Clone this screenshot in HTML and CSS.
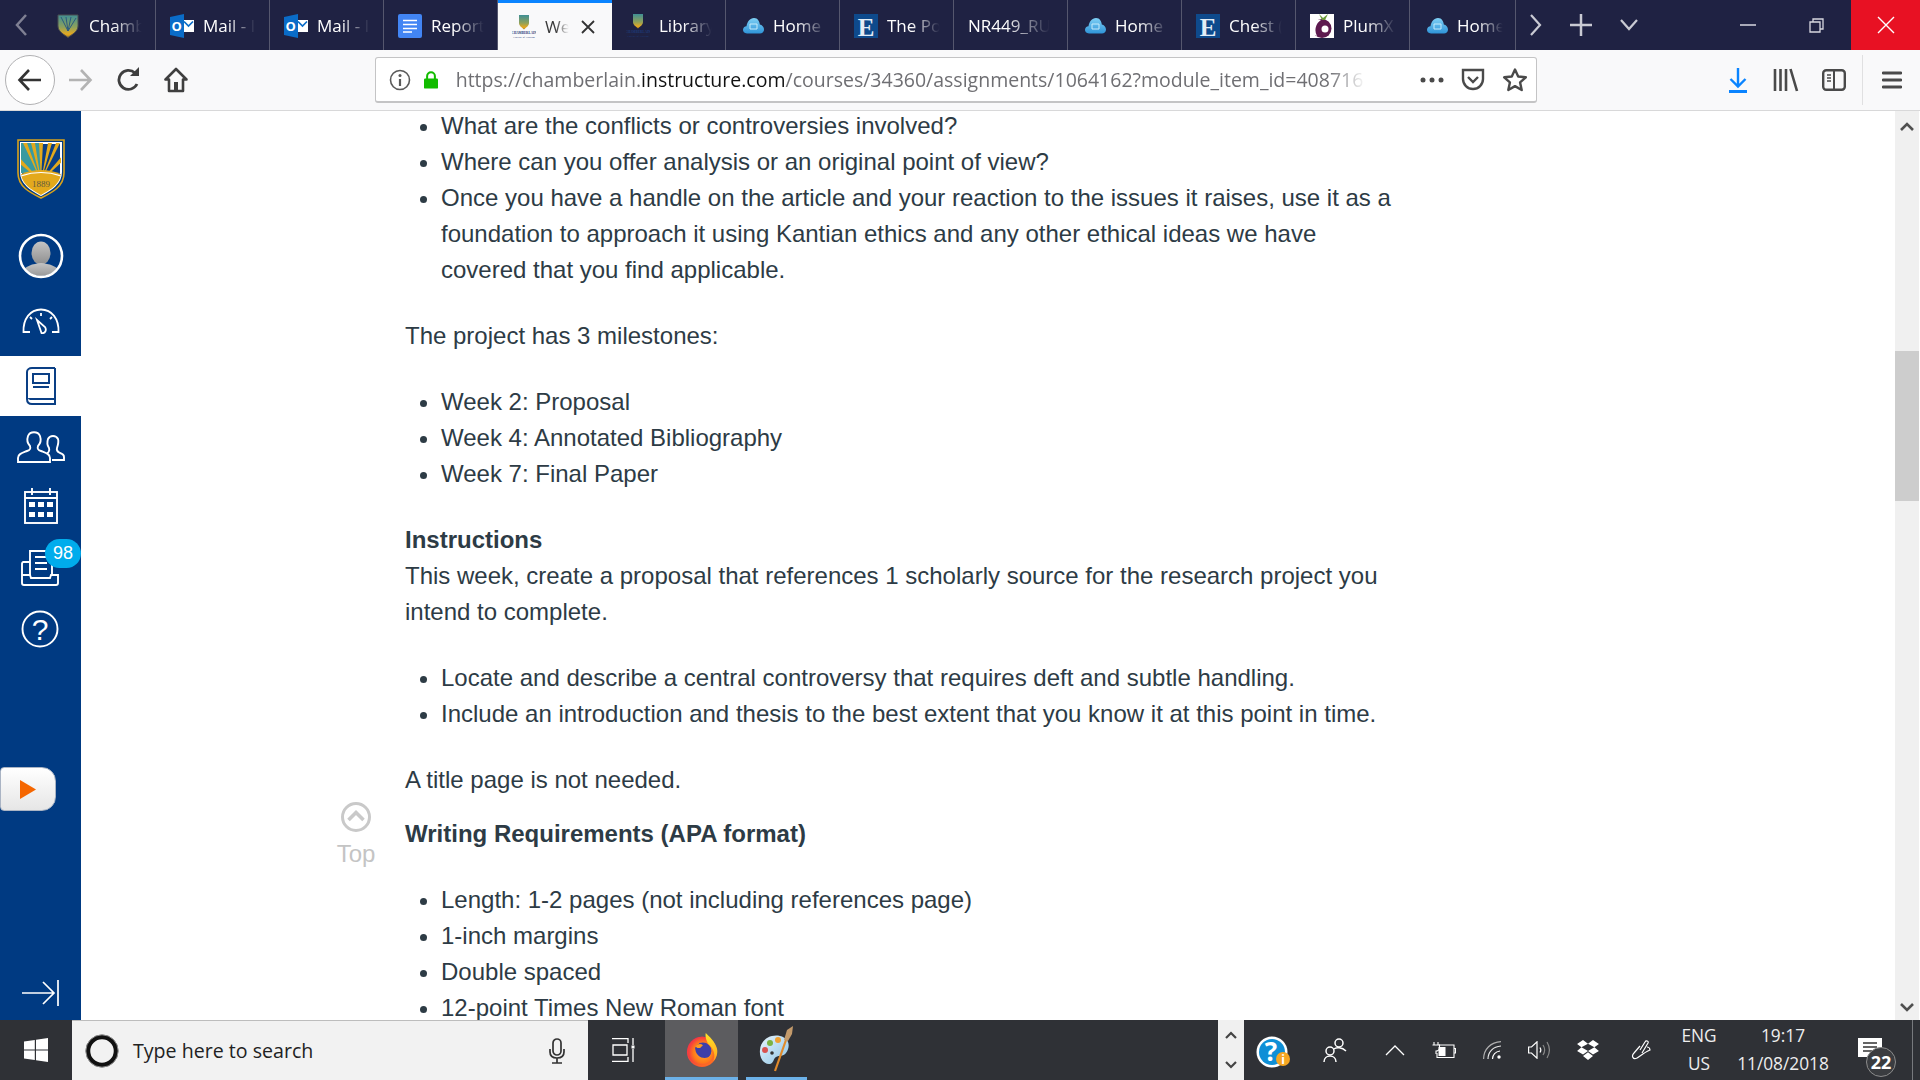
FILE: index.html
```html
<!DOCTYPE html>
<html lang="en">
<head>
<meta charset="utf-8">
<title>Week 2 Assignment</title>
<link rel="stylesheet" href="styles.css">
</head>
<body>
<svg class="defs" width="0" height="0" aria-hidden="true">
  <defs>
    <linearGradient id="shieldGold" x1="0" y1="0" x2="0" y2="1"><stop offset="0" stop-color="#3f8f95"/><stop offset="0.55" stop-color="#8fa15a"/><stop offset="0.85" stop-color="#e6a820"/><stop offset="1" stop-color="#a87f20"/></linearGradient>
    <linearGradient id="avatarGrad" x1="0" y1="0" x2="0" y2="1"><stop offset="0" stop-color="#c4c4c4"/><stop offset="1" stop-color="#8f8f8f"/></linearGradient>
    <radialGradient id="ffBody" cx="0.55" cy="0.55" r="0.6"><stop offset="0" stop-color="#ffb02e"/><stop offset="0.6" stop-color="#ff7a1a"/><stop offset="1" stop-color="#f0264f"/></radialGradient>
    <linearGradient id="ffTop" x1="0" y1="0" x2="0" y2="1"><stop offset="0" stop-color="#ffe226"/><stop offset="1" stop-color="#ffa51f"/></linearGradient>
    <linearGradient id="paintGrad" x1="0" y1="0" x2="1" y2="1"><stop offset="0" stop-color="#e8f4fb"/><stop offset="1" stop-color="#8cc4e6"/></linearGradient>
    <linearGradient id="cloudGrad" x1="0" y1="0" x2="0" y2="1"><stop offset="0" stop-color="#7fd0f5"/><stop offset="1" stop-color="#2f94d8"/></linearGradient>
    <symbol id="i-shield" viewBox="0 0 24 24">
      <path d="M2 1H22V12C22 18 15 21 12 23.500C9 21 2 18 2 12Z" fill="url(#shieldGold)" stroke="#4d4f50" stroke-width="1"/>
      <path d="M12 17L5 3M12 17L10 3M12 17L15 3M12 17L20 4" stroke="#2a5a80" stroke-width="1"/>
    </symbol>
    <symbol id="i-outlook" viewBox="0 0 24 24">
      <rect x="12" y="6" width="12" height="12" fill="#fff"/>
      <path d="M14 7.500L18.500 12L23 7.500" fill="none" stroke="#0a6cc8" stroke-width="1.700"/>
      <path d="M0 3L14 0V24L0 21Z" fill="#0a6cc8"/>
      <text x="6.800" y="16.500" class="svg-o">O</text>
    </symbol>
    <symbol id="i-docs" viewBox="0 0 24 24">
      <rect width="24" height="24" rx="2" fill="#4285f4"/>
      <path d="M5 6.500H19M5 10.500H19M5 14.500H19M5 18H14" stroke="#fff" stroke-width="1.600"/>
    </symbol>
    <symbol id="i-cloud" viewBox="0 0 24 24">
      <path d="M7 19.500C4 19.500 3 17.500 3 15.800C3 13.800 4.500 12.500 6.500 12.300C7 8 10 4 14 4C18 4 19.500 7.500 19.800 10.500C22 11 24 12.800 24 15.500C24 18 22 19.500 20 19.500Z" fill="url(#cloudGrad)"/>
      <path d="M10 15V10H17V15Z" fill="none" stroke="#c5ebfb" stroke-width="1"/>
    </symbol>
    <symbol id="i-e" viewBox="0 0 24 24">
      <rect width="24" height="24" fill="#0e4a8c"/>
      <text x="12" y="21.500" class="svg-e">E</text>
    </symbol>
    <symbol id="i-plum" viewBox="0 0 24 24">
      <rect width="24" height="24" fill="#fff"/>
      <circle cx="12" cy="14.500" r="9.500" fill="#5d1a4f"/>
      <path d="M11 6a8 8 0 0 0-4 16a12 12 0 0 1 4-16Z" fill="#fff"/>
      <circle cx="15" cy="15" r="3.500" fill="#fff"/>
      <path d="M12 6L9 0L13 4L18 0L15 6Z" fill="#6a9a3a"/>
    </symbol>
    <symbol id="i-cham" viewBox="0 0 24 24">
      <path d="M7 0H17V8C17 11 14 12.500 12 14.500C10 12.500 7 11 7 8Z" fill="url(#shieldGold)"/>
      <text x="12" y="19" class="svg-cham">CHAMBERLAIN</text>
      <text x="12" y="23" class="svg-cham2">College of Nursing</text>
    </symbol>
  </defs>
</svg>

<header class="tabbar">
  <div class="tab-scroll-left"><svg width="14" height="26" viewBox="0 0 14 26"><path d="M12 3L3 13L12 23" fill="none" stroke="#7f8093" stroke-width="2.500"/></svg></div>
  <div class="tab"><svg class="fav"><use href="#i-shield"/></svg><span class="tab-label">Chamb</span></div>
  <div class="tab"><svg class="fav"><use href="#i-outlook"/></svg><span class="tab-label">Mail - I</span></div>
  <div class="tab"><svg class="fav"><use href="#i-outlook"/></svg><span class="tab-label">Mail - I</span></div>
  <div class="tab"><svg class="fav"><use href="#i-docs"/></svg><span class="tab-label">Report</span></div>
  <div class="tab tab-active"><svg class="fav"><use href="#i-cham"/></svg><span class="tab-label">We</span><svg class="tab-close" width="16" height="16" viewBox="0 0 16 16"><path d="M2 2L14 14M14 2L2 14" stroke="#333" stroke-width="1.800"/></svg></div>
  <div class="tab"><svg class="fav"><use href="#i-cham"/></svg><span class="tab-label">Library</span></div>
  <div class="tab"><svg class="fav"><use href="#i-cloud"/></svg><span class="tab-label">Home</span></div>
  <div class="tab"><svg class="fav"><use href="#i-e"/></svg><span class="tab-label">The Po</span></div>
  <div class="tab"><span class="tab-label">NR449_RU</span></div>
  <div class="tab"><svg class="fav"><use href="#i-cloud"/></svg><span class="tab-label">Home</span></div>
  <div class="tab"><svg class="fav"><use href="#i-e"/></svg><span class="tab-label">Chest (</span></div>
  <div class="tab"><svg class="fav"><use href="#i-plum"/></svg><span class="tab-label">PlumX</span></div>
  <div class="tab tab-last"><svg class="fav"><use href="#i-cloud"/></svg><span class="tab-label">Home</span></div>
  <div class="tabbar-btn tabbar-next"><svg width="14" height="26" viewBox="0 0 14 26"><path d="M2 3L11 13L2 23" fill="none" stroke="#c9cad3" stroke-width="2.200"/></svg></div>
  <div class="tabbar-btn tabbar-plus"><svg width="22" height="22" viewBox="0 0 22 22"><path d="M11 0V22M0 11H22" stroke="#c9cad3" stroke-width="2.500"/></svg></div>
  <div class="tabbar-btn tabbar-more"><svg width="18" height="12" viewBox="0 0 18 12"><path d="M1 1L9 10L17 1" fill="none" stroke="#c9cad3" stroke-width="2.200"/></svg></div>
  <div class="win-spacer"></div>
  <div class="win-btn win-min"><svg width="16" height="2" viewBox="0 0 16 2"><path d="M0 1H16" stroke="#d8d8e0" stroke-width="1.500"/></svg></div>
  <div class="win-btn"><svg width="15" height="15" viewBox="0 0 15 15"><path d="M1 4H11V14H1ZM4 4V1H14V11H11" fill="none" stroke="#d8d8e0" stroke-width="1.300"/></svg></div>
  <div class="win-btn win-close"><svg width="18" height="18" viewBox="0 0 18 18"><path d="M1 1L17 17M17 1L1 17" stroke="#fff" stroke-width="1.400"/></svg></div>
</header>

<nav class="toolbar">
  <div class="nav-btn nav-back"><svg width="26" height="26" viewBox="0 0 26 26"><path d="M24 13H3M12 3L2.500 13L12 23" fill="none" stroke="#333" stroke-width="2.600"/></svg></div>
  <div class="nav-btn nav-fwd"><svg width="26" height="26" viewBox="0 0 26 26"><path d="M2 13H23M14 3L23.500 13L14 23" fill="none" stroke="#b3b3b3" stroke-width="2.600"/></svg></div>
  <div class="nav-btn nav-reload"><svg width="24" height="26" viewBox="0 0 24 26"><path d="M20 17A9.500 9.500 0 1 1 18 6" fill="none" stroke="#3f3f3f" stroke-width="2.800"/><path d="M13 9H22V0Z" fill="#3f3f3f"/></svg></div>
  <div class="nav-btn nav-home"><svg width="24" height="26" viewBox="0 0 24 26"><path d="M12 2L1.500 12.500H5V24H19V12.500H22.500Z" fill="none" stroke="#3f3f3f" stroke-width="2.600" stroke-linejoin="round"/><rect x="10" y="15" width="4" height="9" fill="#3f3f3f"/></svg></div>
  <div class="urlbar">
    <div class="url-info"><svg width="22" height="22" viewBox="0 0 22 22"><circle cx="11" cy="11" r="9.500" fill="none" stroke="#5a5a5a" stroke-width="1.600"/><path d="M11 10V17" stroke="#5a5a5a" stroke-width="2.200"/><circle cx="11" cy="6.500" r="1.500" fill="#5a5a5a"/></svg></div>
    <div class="url-lock"><svg width="18" height="22" viewBox="0 0 18 22"><path d="M4 10V6a5 5 0 0 1 10 0V10" fill="none" stroke="#12bc00" stroke-width="2.600"/><rect x="0" y="9" width="18" height="13" rx="1.500" fill="#12bc00"/></svg></div>
    <div class="url-text"><span class="url-dim">https://chamberlain.</span><span class="url-host">instructure.com</span><span class="url-dim">/courses/34360/assignments/1064162?module_item_id=408716</span></div>
    <div class="url-more"><svg width="24" height="6" viewBox="0 0 24 6"><circle cx="3" cy="3" r="2.500" fill="#4a4a4a"/><circle cx="12" cy="3" r="2.500" fill="#4a4a4a"/><circle cx="21" cy="3" r="2.500" fill="#4a4a4a"/></svg></div>
    <div class="url-pocket"><svg width="24" height="24" viewBox="0 0 24 24"><path d="M2 2H22V11A10 10 0 0 1 2 11Z" fill="none" stroke="#4a4a4a" stroke-width="2.400"/><path d="M7 9L12 14L17 9" fill="none" stroke="#4a4a4a" stroke-width="2.400"/></svg></div>
    <div class="url-star"><svg width="26" height="26" viewBox="0 0 26 26"><path d="M13 2.500L16.200 9.500L23.800 10.300L18.100 15.400L19.700 23L13 19.100L6.300 23L7.900 15.400L2.200 10.300L9.800 9.500Z" fill="none" stroke="#4a4a4a" stroke-width="2.400" stroke-linejoin="round"/></svg></div>
  </div>
  <div class="tool-space"></div>
  <div class="tool-btn"><svg width="20" height="26" viewBox="0 0 20 26"><path d="M10 1V19M2.500 12L10 19.500L17.500 12" fill="none" stroke="#0a84ff" stroke-width="2.400"/><rect x="1" y="23" width="18" height="3" fill="#0a84ff"/></svg></div>
  <div class="tool-btn"><svg width="26" height="24" viewBox="0 0 26 24"><path d="M2 1V23M7.500 1V23M13 1V23M17.500 1L24 23" fill="none" stroke="#4a4a4a" stroke-width="2.600"/></svg></div>
  <div class="tool-btn"><svg width="24" height="22" viewBox="0 0 24 22"><rect x="1.200" y="1.200" width="21.600" height="19.600" rx="3" fill="none" stroke="#4a4a4a" stroke-width="2.400"/><path d="M12 1V21" stroke="#4a4a4a" stroke-width="2"/><path d="M5 6H9M5 9H9M5 12H9" stroke="#4a4a4a" stroke-width="1.400"/></svg></div>
  <div class="tool-sep"></div>
  <div class="tool-btn tool-menu"><svg width="20" height="20" viewBox="0 0 20 20"><path d="M1 3H19M1 10H19M1 17H19" stroke="#4a4a4a" stroke-width="2.800" stroke-linecap="round"/></svg></div>
</nav>

<main class="app">
  <aside class="sidebar">
    <div class="side-logo">
      <svg width="48" height="60" viewBox="0 0 48 60">
        <defs><clipPath id="shieldClip"><path d="M4 4H44V33C44 45 33 51 24 56C15 51 4 45 4 33Z"/></clipPath></defs>
        <path d="M1 1H47V34C47 48 34 54 24 59C14 54 1 48 1 34Z" fill="#003a82" stroke="#d9a21b" stroke-width="1.600"/>
        <path d="M4 4H44V33C44 45 33 51 24 56C15 51 4 45 4 33Z" fill="#0a3f85" stroke="#fff" stroke-width="2"/>
        <g clip-path="url(#shieldClip)">
          <rect x="4" y="4" width="20" height="30" fill="#3a9aa0"/>
          <path d="M24 42L2 18L2 24ZM24 42L6 4L10 4ZM24 42L14 4L18 4ZM24 42L22 4L26 4ZM24 42L31 4L35 4ZM24 42L39 4L43 4ZM24 42L46 16L46 22Z" fill="#e3a91c"/>
          <path d="M2 36Q24 26 46 36V60H2Z" fill="#e3a91c"/>
          <path d="M4 37Q24 30 44 37" stroke="#fff" stroke-width="1.200" fill="none"/>
          <text x="24" y="48" class="svg-year">1889</text>
        </g>
      </svg>
    </div>
    <div class="side-item side-avatar">
      <svg width="46" height="46" viewBox="0 0 46 46">
        <defs><clipPath id="avClip"><circle cx="23" cy="23" r="20"/></clipPath></defs>
        <g clip-path="url(#avClip)"><ellipse cx="23" cy="20" rx="9.500" ry="11.500" fill="url(#avatarGrad)"/><path d="M2 46C3 33 14 31 23 30C32 31 43 33 44 46Z" fill="url(#avatarGrad)"/></g>
        <circle cx="23" cy="23" r="21" fill="none" stroke="#fff" stroke-width="2.600"/>
      </svg>
    </div>
    <div class="side-item side-dash">
      <svg width="38" height="26" viewBox="0 0 38 26" fill="none" stroke="#fff" stroke-width="1.800"><path d="M8 24H1.500C1 11 8 1.500 19 1.500C30 1.500 37 11 36.500 24H30"/><path d="M19 5V8M8 9L10 11M30 9L28 11"/><path d="M15 12L19.500 25C24 26 24.500 21 23 19Z"/></svg>
    </div>
    <div class="side-item side-active">
      <svg width="30" height="38" viewBox="0 0 30 38" fill="none" stroke="#0a3f85" stroke-width="2"><path d="M29 1H6C3 1 1 3 1 5V32C1 35 3 37 6 37H29V32H6C4 32 3 32 3 31"/><path d="M29 1V32"/><rect x="7" y="7" width="16" height="9"/><path d="M7 20H23"/></svg>
    </div>
    <div class="side-item side-people">
      <svg width="48" height="32" viewBox="0 0 48 32" fill="none" stroke="#fff" stroke-width="1.900"><path d="M1 31V27C1 23 5 22 10 20C13 19 14 18 13 15C10 12 10 8 11 5C13 0 21 0 23 5C24 8 24 12 21 15C20 18 21 19 24 20C29 22 33 23 33 27V31Z"/><path d="M30 22C31 22 33 20 32 17C30 14 30 11 31 8C33 4 39 4 41 8C42 11 41 14 40 17C39 20 41 21 43 22C46 23 47 24 47 26V29H35"/></svg>
    </div>
    <div class="side-item side-cal">
      <svg width="34" height="36" viewBox="0 0 34 36" fill="none" stroke="#fff" stroke-width="1.900"><rect x="1" y="4" width="32" height="31" /><path d="M1 10H33M8 0V7M26 0V7"/><g fill="#fff" stroke="none"><rect x="5" y="14" width="6" height="5"/><rect x="14" y="14" width="6" height="5"/><rect x="23" y="14" width="6" height="5"/><rect x="5" y="24" width="6" height="5"/><rect x="14" y="24" width="6" height="5"/><rect x="23" y="24" width="6" height="5"/></g></svg>
    </div>
    <div class="side-item side-inbox">
      <svg width="38" height="36" viewBox="0 0 38 36" fill="none" stroke="#fff" stroke-width="1.900"><path d="M9 25V1H31V25"/><path d="M9 12H2.500C1.500 12 1 13 1 14V33C1 34 2 35 3 35H35C36 35 37 34 37 33V24"/><path d="M1 25H9L10 28H29L30 25H37"/><path d="M14 7H26M14 13H26M14 19H26"/></svg>
      <span class="side-badge">98</span>
    </div>
    <div class="side-item side-help">
      <svg width="38" height="38" viewBox="0 0 38 38"><circle cx="19" cy="19" r="17.500" fill="none" stroke="#fff" stroke-width="1.900"/><text x="19" y="29.500" class="svg-help">?</text></svg>
    </div>
    <div class="side-spacer"></div>
    <div class="side-play"><svg width="16" height="19" viewBox="0 0 16 19"><path d="M0 0L16 9.500L0 19Z" fill="#f56600"/></svg></div>
    <div class="side-collapse"><svg width="37" height="26" viewBox="0 0 37 26" fill="none" stroke="#fff" stroke-width="1.700"><path d="M0 13H32M21 2L32 13L21 24M36 0V26"/></svg></div>
  </aside>

  <section class="content">
    <div class="top-link">
      <svg width="32" height="30" viewBox="0 0 32 30" fill="none" stroke="#c9c9c9"><circle cx="16" cy="15" r="13.500" stroke-width="3"/><path d="M8.500 18L16 10.500L23.500 18" stroke-width="3.600"/></svg>
      <span>Top</span>
    </div>
    <article class="article">
      <ul>
        <li>What are the conflicts or controversies involved?</li>
        <li>Where can you offer analysis or an original point of view?</li>
        <li>Once you have a handle on the article and your reaction to the issues it raises, use it as a foundation to approach it using Kantian ethics and any other ethical ideas we have covered that you find applicable.</li>
      </ul>
      <p>The project has 3 milestones:</p>
      <ul>
        <li>Week 2: Proposal</li>
        <li>Week 4: Annotated Bibliography</li>
        <li>Week 7: Final Paper</li>
      </ul>
      <p><strong>Instructions</strong><br>This week, create a proposal that references 1 scholarly source for the research project you intend to complete.</p>
      <ul>
        <li>Locate and describe a central controversy that requires deft and subtle handling.</li>
        <li>Include an introduction and thesis to the best extent that you know it at this point in time.</li>
      </ul>
      <p>A title page is not needed.</p>
      <p><strong>Writing Requirements (APA format)</strong></p>
      <ul>
        <li>Length: 1-2 pages (not including references page)</li>
        <li>1-inch margins</li>
        <li>Double spaced</li>
        <li>12-point Times New Roman font</li>
      </ul>
    </article>
  </section>

  <div class="scrollbar">
    <div class="scroll-arrow scroll-arrow-top"><svg width="14" height="9" viewBox="0 0 14 9"><path d="M1 8L7 2L13 8" fill="none" stroke="#505050" stroke-width="2.600"/></svg></div>
    <div class="scroll-thumb"></div>
    <div class="scroll-track"></div>
    <div class="scroll-arrow"><svg width="14" height="9" viewBox="0 0 14 9"><path d="M1 1L7 7L13 1" fill="none" stroke="#505050" stroke-width="2.600"/></svg></div>
  </div>
</main>

<footer class="taskbar">
  <div class="start"><svg width="24" height="24" viewBox="0 0 24 24" fill="#fff"><path d="M0 3.400L10.800 2V11.400H0ZM12 1.800L24 0V11.400H12ZM0 12.600H10.800V22L0 20.600ZM12 12.600H24V24L12 22.200Z"/></svg></div>
  <div class="search">
    <svg class="cortana" width="34" height="34" viewBox="0 0 34 34"><circle cx="17" cy="17" r="14" fill="none" stroke="#111" stroke-width="4.500"/><circle cx="17" cy="17" r="16.200" fill="none" stroke="#8a8a8a" stroke-width="1"/></svg>
    <span class="search-text">Type here to search</span>
    <svg class="mic" width="18" height="26" viewBox="0 0 18 26" fill="none" stroke="#333" stroke-width="1.700"><rect x="5" y="1" width="8" height="16" rx="4"/><path d="M2 11V14C2 18 5 20 9 20C13 20 16 18 16 14V11M9 20V25M4 25H14"/></svg>
  </div>
  <div class="task-view"><svg width="24" height="24" viewBox="0 0 24 24" fill="none" stroke="#fff" stroke-width="1.300"><path d="M0 0.700H16V5M0 23.300H16V19M1 7H15V17H1ZM21 0V7M21 11V24"/><rect x="19.500" y="7.500" width="3" height="3" fill="#fff" stroke="none"/></svg></div>
  <div class="task-app task-app-active">
    <svg width="32" height="34" viewBox="0 0 34 36">
      <circle cx="17" cy="20" r="16" fill="url(#ffBody)"/>
      <circle cx="18" cy="19" r="9" fill="#3d3fa8"/>
      <path d="M3 17C6 7 13 3 19 4C14 7 13 10 14 12C11 12 9 14 10 18C11 24 17 28 23 26C28 24 30 18 27 13C33 17 32 26 26 31C20 36 10 35 5 29C2 25 2 21 3 17Z" fill="url(#ffBody)"/>
      <path d="M21 0C24 3 31 9 33 17C34 22 32 27 29 30C32 24 29 16 24 12C22 9 20 4 21 0Z" fill="url(#ffTop)"/>
      <path d="M10 14C13 11 16 11 18 13L15 16L12 16Z" fill="#ff9a1f"/>
    </svg>
  </div>
  <div class="task-app">
    <svg class="paint-icon" width="36" height="46" viewBox="0 0 36 46">
      <path d="M2 24C3 13 13 8 22 10C31 12 33 20 28 27C25 31 21 29 18 31C15 33 16 37 12 38C6 39 1 32 2 24Z" fill="url(#paintGrad)"/>
      <circle cx="7" cy="24" r="3" fill="#d9534f"/><circle cx="12" cy="17" r="3" fill="#7cb342"/><circle cx="20" cy="14" r="3" fill="#f0a030"/><circle cx="14" cy="27" r="1.800" fill="#333"/>
      <path d="M17 45L28 14" stroke="#e08a2a" stroke-width="2.200"/><path d="M26 14L29 4L35 0L34 8L30 15Z" fill="#c39a6b"/>
    </svg>
  </div>
  <div class="task-space"></div>
  <div class="task-scroll">
    <svg width="12" height="8" viewBox="0 0 12 8"><path d="M1 7L6 2L11 7" fill="none" stroke="#444" stroke-width="2.200"/></svg>
    <svg width="12" height="8" viewBox="0 0 12 8"><path d="M1 1L6 6L11 1" fill="none" stroke="#444" stroke-width="2.200"/></svg>
  </div>
  <div class="tray tray-help">
    <svg width="36" height="36" viewBox="0 0 36 36"><circle cx="16" cy="20" r="15.500" fill="#fff"/><circle cx="16" cy="20" r="13" fill="#0f8fd6"/><text x="15" y="29" class="svg-q">?</text><circle cx="27" cy="27" r="7" fill="#f5a623"/><text x="27" y="32" class="svg-i">i</text></svg>
  </div>
  <div class="tray tray-people"><svg width="24" height="26" viewBox="0 0 24 26" fill="none" stroke="#fff" stroke-width="1.500"><circle cx="16" cy="6" r="4"/><path d="M11 12C13 10 19 10 23 14"/><circle cx="7" cy="14" r="4"/><path d="M1 25C1 21 4 19 7 19C10 19 13 21 13 25"/></svg></div>
  <div class="tray tray-chev"><svg width="20" height="12" viewBox="0 0 20 12"><path d="M1 11L10 2L19 11" fill="none" stroke="#fff" stroke-width="1.300"/></svg></div>
  <div class="tray tray-batt"><svg width="24" height="16" viewBox="0 0 24 16" fill="none" stroke="#fff" stroke-width="1.100"><path d="M7 3H22V15.500H5V11"/><path d="M22 6.500H23.500V11H22" /><rect x="6.500" y="5" width="7" height="9" fill="#fff" stroke="none"/><path d="M2 0V3M6 0V3M0.500 3H7.500V6C7.500 8 5.500 9 4 9V12" /></svg></div>
  <div class="tray tray-wifi"><svg width="18" height="18" viewBox="0 0 18 18" fill="none" stroke-width="1.200"><path d="M0.600 18C0.600 8 8 1 18 0.600" stroke="#b0b0b0"/><path d="M5 18C5 11 10 5.500 18 5" stroke="#e8e8e8"/><path d="M9.500 18C9.500 14 12.500 10.500 17 10" stroke="#fff"/><circle cx="16" cy="16" r="1.700" fill="#fff"/></svg></div>
  <div class="tray tray-vol"><svg width="22" height="18" viewBox="0 0 22 18" fill="none" stroke="#fff" stroke-width="1.200"><path d="M0.600 6H3.500L9 0.800V17.200L3.500 12H0.600Z"/><path d="M12 6.500C13 8 13 10 12 11.500"/><path d="M15 4C17 7 17 11 15 14M19 1C22 6 22 12 19 17" stroke="#888"/></svg></div>
  <div class="tray tray-drop"><svg width="22" height="20" viewBox="0 0 24 22" fill="#fff"><path d="M6.500 0L0 4.300L4.800 8L12 4ZM17.500 0L12 4L19 8L24 4.300ZM4.800 8L0 12L6.500 16L12 12ZM19 8L12 12L17.500 16L24 12ZM12 13.500L6.500 17.500L12 22L17.500 17.500Z"/></svg></div>
  <div class="tray tray-pen"><svg width="20" height="20" viewBox="0 0 20 20" fill="none" stroke="#fff" stroke-width="1.200"><path d="M9 10L14 2C15 0 18 1 17 3L11 13"/><path d="M9 6L3 13C0 16 2 20 6 18C9 16 14 12 19 10C19 8 17 7 16 7"/></svg></div>
  <div class="tray tray-lang"><span>ENG</span><span>US</span></div>
  <div class="tray tray-clock"><span>19:17</span><span>11/08/2018</span></div>
  <div class="tray tray-notif">
    <svg width="24" height="19" viewBox="0 0 24 19"><path d="M0 0H24V19H0Z" fill="#fff"/><path d="M5 5H19M5 9H19M5 13H19" stroke="#333" stroke-width="1.300"/></svg>
    <span class="notif-count">22</span>
  </div>
</footer>
</body>
</html>
```

FILE: styles.css
```css
* { box-sizing: border-box; }
html, body { margin: 0; padding: 0; }
body {
  width: 1920px;
  height: 1080px;
  overflow: hidden;
  display: flex;
  flex-direction: column;
  font-family: "Liberation Sans", Arial, sans-serif;
  background: #fff;
}
.defs { position: absolute; }

.svg-o { font: 700 13px "Open Sans", sans-serif; fill: #fff; text-anchor: middle; }
.svg-e { font: 700 25px "Liberation Serif", serif; fill: #e4edf6; text-anchor: middle; }
.svg-cham { font: 700 3.300px "Liberation Serif", serif; fill: #1e3a78; text-anchor: middle; }
.svg-cham2 { font: 400 2.800px "Liberation Serif", serif; fill: #1e3a78; text-anchor: middle; }
.svg-year { font: 400 9px "Liberation Serif", serif; fill: #5f5a40; text-anchor: middle; }
.svg-help { font: 400 30px "Liberation Sans", sans-serif; fill: #fff; text-anchor: middle; }
.svg-q { font: 700 26px "Open Sans", sans-serif; fill: #fff; text-anchor: middle; }
.svg-i { font: 700 12px "Open Sans", sans-serif; fill: #fff; text-anchor: middle; }

/* tab strip */
.tabbar {
  height: 50px;
  flex: none;
  display: flex;
  background: #1f2243;
  color: #fff;
  font-family: "Open Sans", sans-serif;
  font-size: 17px;
}
.tab-scroll-left { width: 42px; display: flex; align-items: center; justify-content: center; }
.tab {
  width: 114px;
  flex: none;
  display: flex;
  align-items: center;
  padding: 0 6px 0 14px;
  border-right: 1px solid #55576e;
}
.tab-last { width: 106px; }
.tab-active {
  background: #f9f9fa;
  border-top: 3px solid #0a84ff;
  border-right: 0;
  color: #3a3a3a;
  padding-right: 16px;
}
.fav { width: 24px; height: 24px; flex: none; margin: 2px 9px 0 0; }
.tab-active .fav { margin-top: 0; }
.tab-label {
  flex: 1;
  min-width: 0;
  white-space: nowrap;
  -webkit-mask-image: linear-gradient(to right, #000 40%, transparent 88%);
  mask-image: linear-gradient(to right, #000 40%, transparent 88%);
}
.tab-close { flex: none; margin-left: 8px; }
.tabbar-btn { display: flex; align-items: center; justify-content: center; height: 50px; flex: none; }
.tabbar-next { width: 40px; }
.tabbar-plus { width: 50px; }
.tabbar-more { width: 46px; }
.win-spacer { flex: 1; }
.win-btn { width: 70px; height: 50px; flex: none; display: flex; align-items: center; justify-content: center; }
.win-min svg { margin-left: 4px; }
.win-close { width: 69px; background: #e81123; }

/* nav bar */
.toolbar {
  height: 61px;
  flex: none;
  display: flex;
  align-items: center;
  background: #f9f9fa;
  border-bottom: 1px solid #d8d8d9;
}
.nav-btn { height: 50px; display: flex; align-items: center; justify-content: center; flex: none; }
.nav-back {
  width: 50px;
  margin-left: 5px;
  border-radius: 50%;
  border: 1px solid #b1b1b3;
  background: #fff;
}
.nav-fwd { width: 50px; }
.nav-reload { width: 47px; }
.nav-home { width: 47px; margin-right: 176px; }
.urlbar {
  width: 1162px;
  height: 46px;
  flex: none;
  display: flex;
  align-items: center;
  background: #fff;
  border: 1px solid #c4c4c5;
  border-bottom-width: 2px;
  border-radius: 3px;
  font-family: "Open Sans", sans-serif;
}
.url-info { width: 47px; margin-left: 1px; display: flex; justify-content: center; }
.url-lock { width: 14px; display: flex; justify-content: center; }
.url-text {
  width: 910px;
  flex: none;
  margin-left: 18px;
  font-size: 19.500px;
  white-space: nowrap;
  overflow: hidden;
  -webkit-mask-image: linear-gradient(to right, #000 96%, transparent 100%);
  mask-image: linear-gradient(to right, #000 96%, transparent 100%);
}
.url-dim { color: #6f6f73; }
.url-host { color: #111; }
.url-more { width: 30px; margin-left: 51px; display: flex; justify-content: center; }
.url-pocket { width: 42px; margin-left: 6px; display: flex; justify-content: center; }
.url-star { width: 42px; display: flex; justify-content: center; }
.tool-space { flex: 1; }
.tool-btn { width: 48px; height: 50px; display: flex; align-items: center; justify-content: center; flex: none; }
.tool-sep { width: 1px; height: 50px; background: #e0e0e1; flex: none; margin-left: 4px; }
.tool-menu { width: 57px; }

/* app region */
.app { flex: 1; min-height: 0; display: flex; }
.sidebar {
  width: 81px;
  flex: none;
  background: #003a82;
  display: flex;
  flex-direction: column;
}
.side-logo { height: 113px; flex: none; display: flex; justify-content: center; padding-top: 28px; }
.side-item {
  flex: none;
  display: flex;
  align-items: center;
  justify-content: center;
  position: relative;
}
.side-avatar { height: 64px; }
.side-dash { height: 68px; padding-bottom: 2px; }
.side-active { background: #fff; height: 60px; }
.side-people { height: 62px; }
.side-cal { height: 56px; }
.side-inbox { height: 68px; }
.side-inbox svg { margin-left: -1px; }
.side-help { height: 54px; padding-right: 2px; }
.side-badge {
  position: absolute;
  left: 45px;
  top: 5px;
  width: 36px;
  height: 29px;
  border-radius: 15px;
  background: #00acec;
  color: #fff;
  font-size: 18px;
  line-height: 29px;
  text-align: center;
}
.side-spacer { flex: 1; }
.side-play {
  width: 56px;
  height: 44px;
  flex: none;
  background: linear-gradient(#fff, #e6e6e6);
  border-radius: 4px 14px 14px 4px;
  border: 1px solid #aab4c4;
  display: flex;
  align-items: center;
  justify-content: center;
  margin-bottom: 169px;
}
.side-collapse { height: 26px; flex: none; padding-left: 22px; margin-bottom: 14px; }

.content { flex: 1; min-width: 0; position: relative; overflow: hidden; padding-left: 324px; }
.article {
  width: 1000px;
  margin-top: -33px;
  color: #2d3b45;
  font-size: 24px;
  line-height: 36px;
}
.article p { margin: 18px 0; }
.article ul { margin: 30px 0; padding-left: 36px; }
.top-link {
  position: absolute;
  left: 250px;
  top: 691px;
  width: 50px;
  display: flex;
  flex-direction: column;
  align-items: center;
  gap: 4px;
  color: #c4c4c4;
  font-size: 24px;
  line-height: 36px;
}

.scrollbar {
  width: 24px;
  flex: none;
  margin-right: 1px;
  background: #f0f0f0;
  display: flex;
  flex-direction: column;
}
.scroll-arrow { height: 25px; flex: none; display: flex; align-items: center; justify-content: center; }
.scroll-arrow-top { height: 30px; }
.scroll-thumb { height: 150px; flex: none; margin-top: 210px; background: #cdcdcd; }
.scroll-track { flex: 1; }

/* taskbar */
.taskbar {
  height: 60px;
  flex: none;
  display: flex;
  align-items: stretch;
  background: #2f3136;
  color: #fff;
  font-family: "Open Sans", sans-serif;
}
.start { width: 72px; display: flex; align-items: center; justify-content: center; flex: none; }
.search {
  width: 516px;
  flex: none;
  background: #f2f2f2;
  border-top: 1px solid #bdbdbd;
  display: flex;
  align-items: center;
  color: #222;
  font-size: 19.600px;
}
.cortana { margin-left: 13px; }
.search-text { margin-left: 14px; flex: 1; }
.mic { margin-right: 22px; }
.task-view { width: 77px; flex: none; display: flex; align-items: center; justify-content: center; padding-right: 5px; }
.task-app {
  width: 61px;
  flex: none;
  display: flex;
  align-items: center;
  justify-content: center;
  border-bottom: 3px solid #6cb1e8;
  margin-left: 8px;
}
.task-app-active { width: 73px; margin-left: 0; background: #5c5c5f; padding-top: 3px; }
.paint-icon { margin-right: 2px; }
.task-space { flex: 1; }
.task-scroll {
  width: 26px;
  flex: none;
  background: #f0f0f0;
  display: flex;
  flex-direction: column;
  align-items: center;
  justify-content: space-between;
  padding: 11px 0;
}
.tray { flex: none; display: flex; align-items: center; justify-content: center; }
.tray-help { width: 60px; }
.tray-people { width: 62px; }
.tray-chev { width: 58px; }
.tray-batt { width: 40px; }
.tray-wifi { width: 56px; }
.tray-vol { width: 38px; }
.tray-drop { width: 60px; }
.tray-pen { width: 46px; }
.tray-lang, .tray-clock {
  flex-direction: column;
  justify-content: center;
  gap: 4px;
  font-size: 17.300px;
  line-height: 24px;
  color: #eee;
}
.tray-lang { width: 70px; }
.tray-clock { width: 98px; }
.tray-notif {
  width: 88px;
  position: relative;
  justify-content: flex-start;
  padding: 0 0 5px 26px;
}
.tray-notif::after {
  content: "";
  position: absolute;
  left: 80px;
  top: 0;
  bottom: 0;
  width: 1px;
  background: #77797d;
}
.notif-count {
  position: absolute;
  left: 34px;
  top: 27px;
  width: 30px;
  height: 30px;
  border-radius: 50%;
  background: #3a3c40;
  border: 1px solid #8c8c8c;
  font-size: 18px;
  font-weight: 700;
  line-height: 28px;
  text-align: center;
}
```
